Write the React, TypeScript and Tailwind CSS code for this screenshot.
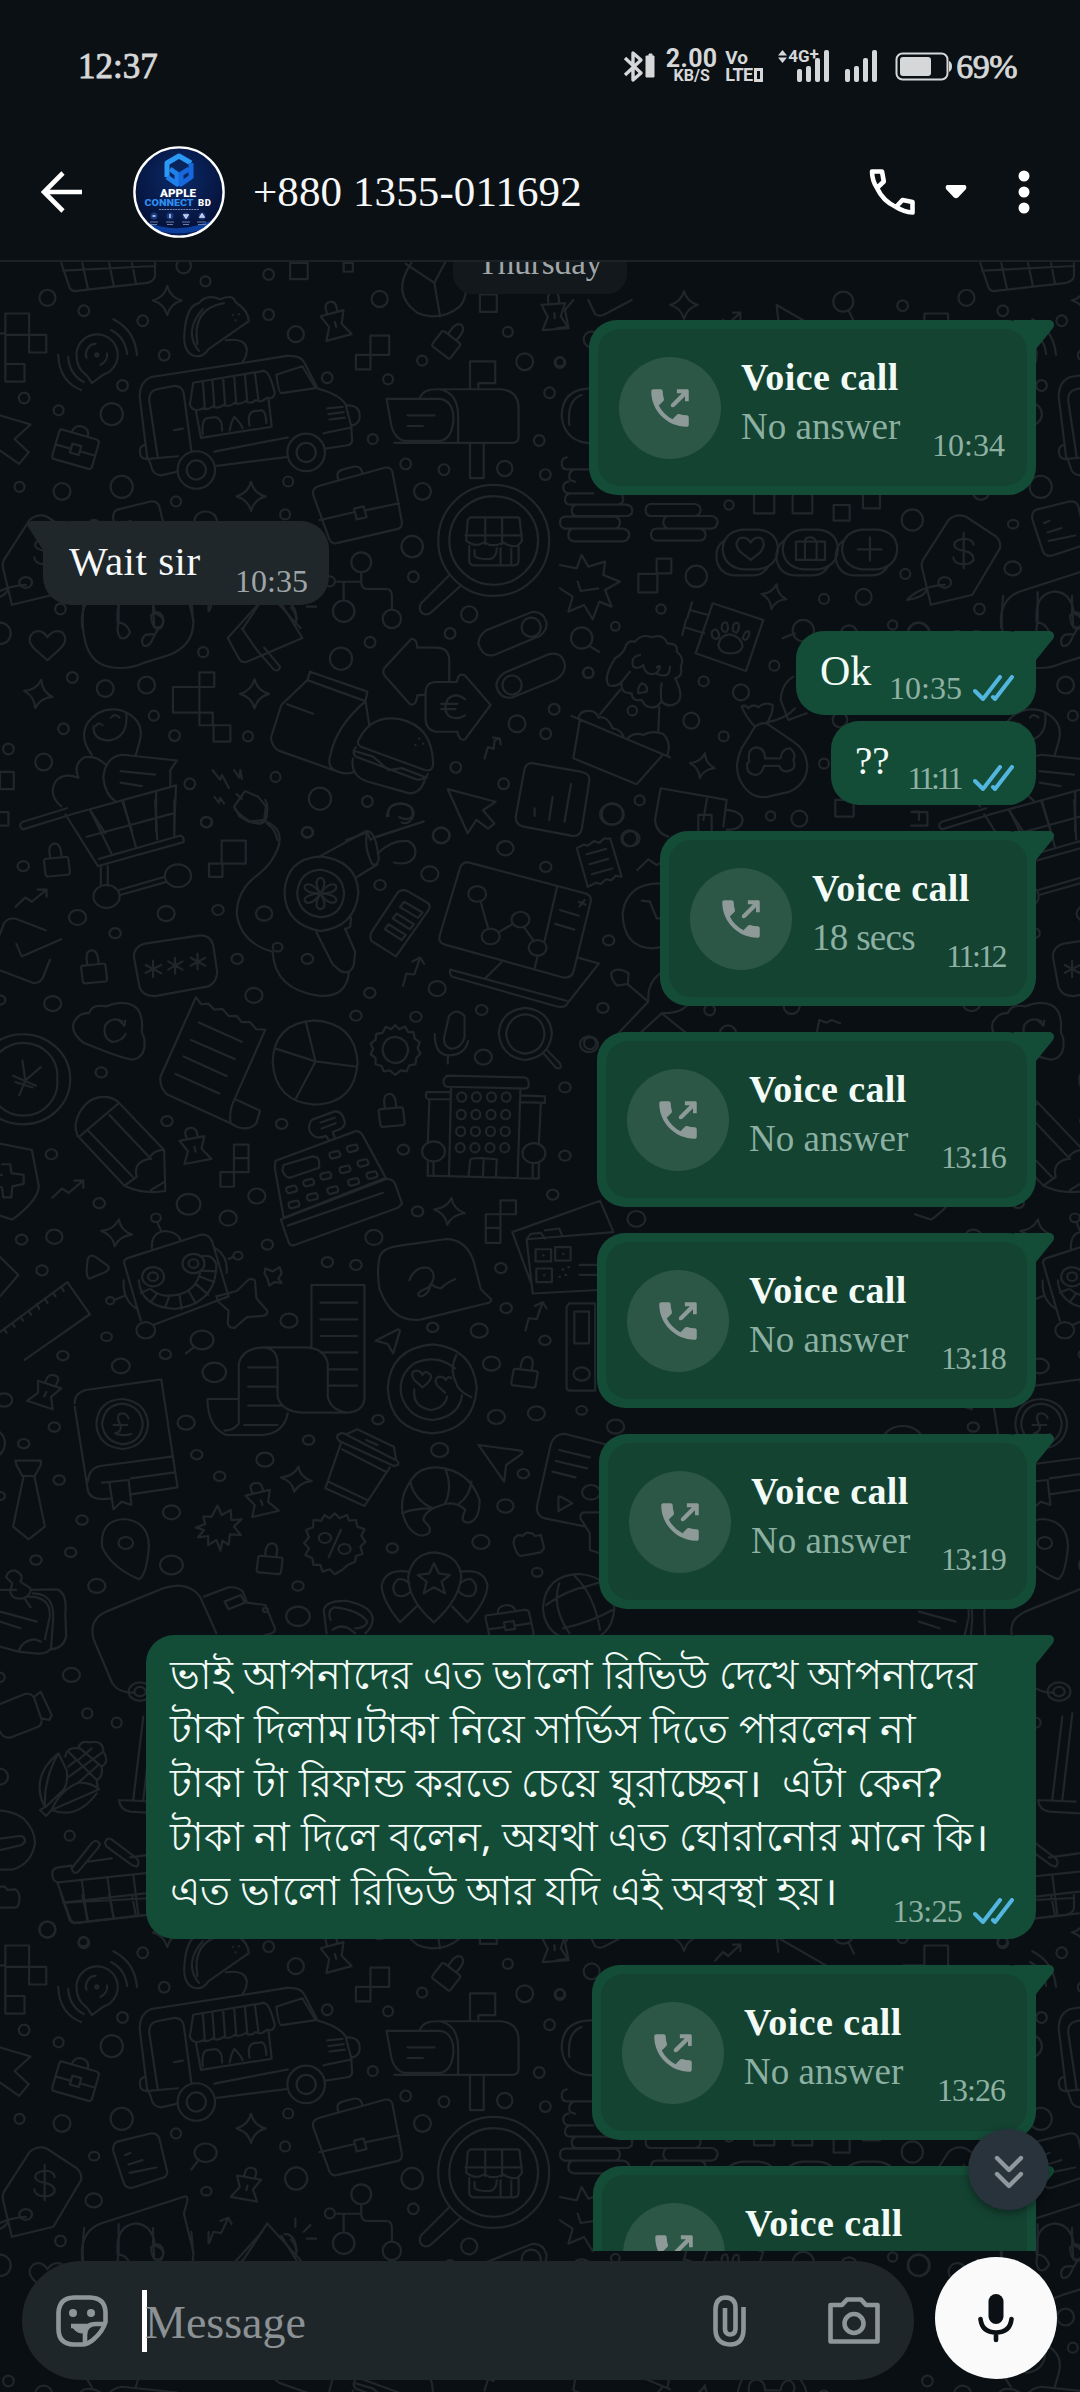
import type { ReactNode } from "react";

type Dot = [number, number, number];

const SERIF = "font-['Liberation_Serif',serif]";

const Dots = ({ items }: { items: Dot[] }) => (
  <>
    {items.map(([cx, cy, r], i) => (
      <circle key={i} cx={cx} cy={cy} r={r} />
    ))}
  </>
);

/* Small doodles that repeat all over the wallpaper */
const Star = ({ at }: { at: string }) => (
  <path transform={at} d="M0-38Q8-8 38 0Q8 8 0 38Q-8 8-38 0Q-8-8 0-38Z" />
);
const Lock = ({ at }: { at: string }) => (
  <path transform={at} d="M-24-10H24Q30-10 30-4V32Q30 40 24 40H-24Q-30 40-30 32V-4Q-30-10-24-10ZM-14-10V-30Q-12-50 0-50Q12-50 14-30V-10" />
);
const Pin = ({ at }: { at: string }) => (
  <path transform={at} d="M-14-28V-46Q-12-58 0-58Q12-58 14-46V-28M-32-28H30L16 5L34 38H-34L-18 5ZM0-4V10" />
);
const Zigzag = ({ at }: { at: string }) => (
  <path transform={at} d="M-40 24L-16-2L0 10L36-24M14-24H36V-4" />
);
const Case = ({ at }: { at: string }) => (
  <path transform={at} d="M-52-38H44Q54-38 54-28V34Q54 42 44 42H-46Q-54 42-54 34V-30ZM-22-38Q-20-60 0-60Q20-60 22-38M-54 4H-12M12 4H54M-12-10H12V14H-12Z" />
);

const DoodleTile = () => (
  <>
    <g transform="translate(0 240) scale(.3827)">
      <Dots
        items={[
          [480, 68, 19], [537, 108, 13], [702, 90, 14], [124, 151, 21], [219, 185, 14], [373, 211, 14], [702, 195, 14],
          [773, 246, 21], [429, 301, 14], [320, 380, 14], [63, 413, 14], [153, 445, 13], [292, 455, 29], [51, 645, 13],
          [162, 657, 22], [318, 645, 29], [460, 683, 13], [753, 631, 13], [745, 717, 13], [992, 154, 21], [1103, 315, 13],
          [1014, 364, 13], [855, 360, 14], [974, 520, 13], [1060, 585, 14], [1160, 600, 14], [1319, 597, 20], [1104, 657, 22],
          [1077, 801, 28], [1080, 880, 14], [1226, 978, 21], [1176, 1028, 14], [967, 1051, 14], [891, 1094, 29], [1371, 318, 22],
          [1463, 320, 14], [1327, 240, 13], [1436, 399, 14], [1409, 524, 14], [1425, 613, 14], [158, 964, 14], [189, 1143, 14],
          [275, 1172, 22], [383, 1163, 22], [531, 1077, 13], [402, 1243, 13], [166, 1277, 14], [456, 1295, 14], [648, 1297, 13],
          [22, 1330, 14], [114, 1364, 22], [496, 1421, 14], [720, 1403, 13], [836, 1460, 29], [960, 1467, 14], [539, 1521, 14],
          [803, 1548, 14], [1191, 1378, 14], [1351, 1264, 22], [1426, 1290, 14], [1448, 1226, 14], [1537, 1131, 14],
          [1316, 1421, 14], [1153, 1556, 21], [0, 1028, 28], [253, 300, 4], [774, 801, 29],
        ]}
      />
      <Star at="translate(437 158)" />
      <Star at="translate(656 670)" />
      <Star at="translate(665 1186)" />
      <Star at="translate(100 1186) rotate(12)" />
      {/* basket and pixels */}
      <path d="M160 60L182 125Q188 135 200 133L385 112Q402 108 405 95V60M215 60L230 128M285 60L298 122M345 60L355 113M165 80L405 68" />
      <path d="M758 60H804V102H758ZM898 60H922V83H898ZM14 192H76V248H14ZM76 248H121V294H76ZM-40 244H14V370H64V324H14" />
      <path d="M968 250H1017V300H968ZM930 300H968V338H930ZM1254 142H1298V188H1254Z" />
      <path d="M452 1168H521V1235H452ZM521 1130H560V1168H521ZM521 1235H556V1268H521ZM558 1268H602V1311H558ZM0 1390H36V1435H0ZM-20 1495H22V1530H-20" />
      {/* podcast bubble */}
      <path d="M228 355Q198 335 200 295A54 54 0 1 1 270 352L240 374ZM226 308A28 28 0 0 1 250 271M280 296A28 28 0 0 1 262 326M152 300Q155 370 212 392M178 306Q182 352 219 371M296 207Q352 235 358 300M290 235Q328 255 332 298" />
      {/* taco */}
      <path d="M505 302Q475 290 483 232Q490 170 520 165Q540 140 575 155Q610 140 615 162Q650 185 650 212L545 285Q528 310 505 302M520 290Q478 240 530 180M516 272Q500 180 585 165M590 262Q640 255 645 285Q645 305 634 318M608 196H609M624 194H625M615 210H616" />
      {/* food truck */}
      <path d="M385 572L365 410Q365 370 395 358L750 303Q785 300 795 320L830 388Q890 405 903 430L918 487L920 525Q918 535 905 537L850 545M750 567L565 590M465 605L420 615Q398 612 395 590L388 572L465 565M560 553L752 516M845 505L918 490M412 567L390 420Q388 395 410 390L455 381Q475 380 480 400L500 550M455 497L478 493M908 432Q940 432 940 460Q940 482 918 485M378 535Q360 540 368 565Q374 574 388 572" />
      <path d="M722 352L790 330L825 387L735 400Q728 400 722 352ZM505 373L690 342Q705 345 718 400Q715 418 698 412Q680 428 668 418Q655 430 642 421Q625 432 612 426Q600 438 585 431Q570 442 555 435Q545 445 530 440Q505 452 496 430ZM530 370L535 438M555 366L560 434M583 361L588 430M612 356L617 425M640 352L646 420M666 347L675 416M512 447L525 517L710 488L702 418M530 508Q525 465 545 465L565 463Q582 470 580 498M600 498Q602 480 612 462Q630 480 634 492M652 485Q645 450 665 447L685 445Q695 450 696 478M855 440L895 436M858 455L898 450M861 469L901 464" />
      <Dots items={[[513, 601, 49], [513, 601, 25], [800, 555, 49], [800, 555, 25]]} />
      {/* mailbox */}
      <path d="M1010 415H1150Q1185 420 1185 470Q1180 525 1145 525H1055Q1025 515 1020 470ZM1098 412Q1105 390 1140 390H1310Q1355 395 1355 440V515Q1355 530 1340 530H1030M1150 390Q1197 400 1197 460V530M1228 388V317H1294V374H1250V388M1228 530V622H1264V530M1065 458H1135M1065 486H1105" />
      {/* briefcases */}
      <path d="M835 642L1005 595Q1020 592 1025 605L1050 735Q1052 750 1040 755L880 792Q865 795 860 780L818 665Q815 648 835 642ZM885 628Q875 605 895 600L925 592Q945 590 947 610M835 732L922 712M957 706L1043 688M925 702L950 696L958 724L932 730Z" />
      <Case at="translate(198 545) rotate(16)" />
      {/* store under a magnifier */}
      <Dots items={[[1290, 785, 145], [1290, 785, 116]]} />
      <path d="M1172 878L1100 950Q1092 968 1105 976Q1118 982 1130 970L1203 904M1228 725H1352Q1358 725 1358 732L1364 785Q1355 802 1340 800Q1325 798 1315 790Q1290 805 1265 790Q1240 805 1218 785L1222 732ZM1216 772H1364M1268 725V795M1312 725V795M1226 800V840Q1228 850 1240 850H1345Q1355 848 1355 838V800M1240 810V825Q1245 834 1280 834Q1298 830 1298 805M1308 850V805M1336 850V808" />
      {/* cursor on the left edge */}
      <path d="M-10 455L80 482L38 520L75 555L50 585L-8 545" />
      <Pin at="translate(876 218) rotate(-15)" />
      <Pin at="translate(1449 195) rotate(-4)" />
      <Lock at="translate(1175 262) rotate(38)" />
      <path d="M1075 60Q1020 140 1090 190Q1150 215 1200 175Q1225 150 1215 90M1060 62L1135 112L1150 200M1135 112L1165 55" />
      {/* sitemap */}
      <Dots items={[[944, 842, 26], [898, 970, 28], [1024, 990, 24], [862, 892, 13]]} />
      <path d="M876 893H944M944 868V893Q944 912 960 912H1010Q1024 912 1024 930V966M898 893V942" />
      {/* megaphone, heart, headphones bubble */}
      <path d="M685 940L595 1040L625 1095Q635 1108 650 1100L790 1040L735 950M632 1015L670 1070L715 1122Q728 1130 732 1115L690 1065M760 960Q780 980 772 1005M802 958H826" />
      <path d="M124 1098L92 1070Q65 1045 88 1025Q110 1015 124 1038Q140 1015 162 1025Q182 1045 155 1070Z" />
      <path d="M220 930Q200 1100 285 1115Q330 1125 375 1105L440 1085Q505 1060 505 1000L500 940M310 920V1000M400 930V975M395 980Q412 970 425 990Q430 1012 412 1018Q395 1010 395 980ZM310 1000Q330 1000 340 1025Q330 1045 315 1040Q302 1025 310 1000ZM412 1018L400 1040Q390 1065 375 1060Q365 1045 380 1032L400 1030M545 940L545 970" />
      {/* arrows with euro, pills */}
      <path d="M1075 1042L1005 1118Q998 1128 1005 1138L1070 1212Q1085 1220 1090 1195V1190L1110 1188M1075 1042Q1090 1042 1090 1065H1140Q1174 1065 1174 1100V1152M1195 1150Q1198 1130 1215 1138L1282 1215L1215 1305Q1200 1310 1195 1285H1140Q1112 1280 1112 1250V1180Q1112 1158 1135 1155H1193ZM1215 1200Q1190 1180 1170 1200Q1155 1230 1175 1245Q1195 1255 1215 1242M1153 1212H1195M1153 1226H1190" />
      <path d="M1270 1020L1390 972Q1420 970 1428 1000Q1430 1020 1410 1035L1290 1085Q1260 1090 1250 1055Q1250 1035 1270 1020ZM1320 1130L1435 1082Q1470 1075 1476 1110Q1478 1135 1450 1150L1340 1195Q1305 1202 1297 1165Q1297 1145 1320 1130Z" />
      <Dots items={[[1388, 1012, 25], [1338, 1163, 25], [1520, 1040, 28]]} />
      {/* paper bag and burger */}
      <path d="M810 1128L960 1180L955 1205L803 1150ZM803 1150L735 1215L708 1300Q710 1325 730 1335L880 1388Q905 1398 925 1390M750 1213L818 1238M955 1205Q880 1270 865 1340Q850 1380 885 1390M955 1205L965 1268M938 1305Q970 1240 1045 1252Q1130 1270 1132 1370Q1130 1390 1110 1385L945 1325Q930 1318 938 1305ZM925 1335L975 1350L1015 1385L1050 1380L1115 1405M930 1325Q918 1340 930 1350L1090 1410Q1110 1412 1118 1395M922 1355Q915 1400 960 1415L1070 1446Q1100 1445 1110 1410M1095 1303H1096M1105 1316H1106M1085 1320H1086" />
      <path d="M1266 1355L1275 1325L1290 1330L1292 1308L1306 1302L1288 1300M1306 1302L1308 1318M1170 1435L1295 1468L1262 1490L1292 1525L1275 1538L1245 1515L1222 1550ZM1390 1367L1520 1390Q1542 1395 1540 1412L1520 1540Q1515 1560 1495 1557L1365 1532Q1345 1525 1348 1505L1370 1385Q1375 1365 1390 1367ZM1397 1485V1505M1444 1455L1435 1515M1492 1422L1475 1520" />
      {/* trolley load */}
      <path d="M240 1345Q205 1300 230 1260Q265 1215 320 1230Q380 1255 365 1310L355 1345M245 1270Q240 1305 285 1308Q335 1300 330 1240M290 1248Q300 1235 312 1248M250 1270Q258 1258 268 1268M160 1480Q125 1450 145 1415Q165 1390 205 1405Q190 1370 220 1352Q250 1345 275 1370M462 1360L320 1345Q275 1350 270 1405Q275 1450 300 1465M462 1360L445 1385V1430M315 1388L405 1397M315 1418L370 1427" />
      <path d="M175 1485L60 1520Q45 1530 60 1540L190 1500L460 1425L455 1545M235 1490L275 1550M320 1468L345 1545M408 1440V1545" />
      {/* plug */}
      <path d="M555 1385L575 1410L580 1398L598 1432M612 1385L625 1405L628 1385L632 1408M560 1455L572 1470L575 1458L585 1472M640 1440L612 1480L625 1505L650 1520L690 1515L695 1480L675 1455ZM618 1448L632 1460M650 1520L680 1526L698 1505M698 1525Q720 1540 725 1568M1015 1505Q1010 1475 1045 1472Q1085 1475 1080 1505Q1070 1530 1050 1522M970 1565L1105 1520M905 1568L960 1548L968 1568" />
    </g>

    <g transform="translate(0 1930) scale(.3954 .3333) translate(0 -4896)">
      <Dots items={[[520, 668, 28], [238, 678, 13], [237, 811, 21], [522, 783, 13], [65, 853, 16]]} />
      <path d="M118 655L195 715Q208 730 205 750L135 890L30 920L8 810Q5 795 10 785L75 665Q95 645 118 655ZM138 740Q135 720 110 722Q85 728 90 745Q95 755 115 758Q140 765 138 785Q130 800 108 798Q88 795 87 778M113 705V810M-30 905Q0 865 65 860M-30 905Q10 900 20 875" />
      <path d="M295 635L380 610Q398 608 403 625L423 725Q423 740 412 743L335 773Q318 775 313 758L287 665Q283 645 295 635ZM316 675L330 668M325 703L360 690M328 728L395 712M503 688L484 718M208 990Q200 905 255 880L465 800Q475 795 474 812L465 850L490 970M298 975Q290 885 345 880Q385 885 392 945M388 945Q410 935 414 970Q408 995 390 985ZM676 880L615 990M676 880L760 990M720 912Q745 910 750 960M747 865V890M785 885L768 905" />
      <Pin at="translate(625 770) rotate(12)" />
      <Zigzag at="translate(555 900) rotate(-25)" />
    </g>

    <g transform="translate(0 800) scale(.4082 .3571)">
      <Dots
        items={[
          [506, 62, 14], [57, 185, 14], [190, 329, 21], [407, 318, 21], [282, 373, 14], [534, 308, 14], [647, 318, 20],
          [129, 570, 21], [0, 560, 13], [622, 547, 21], [581, 445, 14], [753, 445, 14], [753, 90, 14], [1081, 99, 21],
          [1053, 207, 21], [931, 238, 14], [1238, 135, 20], [1499, 40, 29], [1546, 108, 21], [1337, 187, 14], [1491, 393, 14],
          [906, 540, 14], [1071, 528, 21], [872, 604, 14], [1019, 607, 14], [1180, 588, 14], [1477, 582, 14], [1184, 720, 21],
          [1443, 684, 22], [1384, 805, 14], [1384, 996, 14], [1354, 1105, 14], [988, 979, 14], [248, 763, 14], [409, 899, 14],
          [690, 907, 14], [126, 992, 14], [243, 1129, 14], [462, 1132, 29], [629, 1109, 21], [559, 1171, 21], [53, 1231, 14],
          [133, 1223, 20], [655, 1245, 14], [916, 1225, 21], [1023, 1152, 14], [802, 1294, 14], [872, 1302, 14], [103, 1317, 14],
          [1227, 1311, 14], [1240, 1423, 14], [1559, 1173, 22],
        ]}
      />
      {/* trolley */}
      <Dots items={[[261, 270, 32], [436, 212, 32]]} />
      <path d="M160 40L240 185L450 118Q452 100 440 100L242 165M222 30L275 155M302 5L333 132M380 0L385 110M427 0V100M213 103L422 38M247 187V238M264 185V240M292 252L404 215M294 266L406 230M512 178H545V215H512ZM543 114H602V178H543Z" />
      <Lock at="translate(138 172) rotate(-6)" />
      <Lock at="translate(229 471) rotate(-6)" />
      <Lock at="translate(958 873) rotate(-6)" />
      <Zigzag at="translate(78 275)" />
      <Zigzag at="translate(1010 480) rotate(-30)" />
      <Zigzag at="translate(168 1090)" />
      <Zigzag at="translate(1310 1445) rotate(-30)" />
      <Star at="translate(286 1212) rotate(8)" />
      <Star at="translate(1101 1152) rotate(8)" />
      <path d="M-5 390L10 345Q20 328 40 333L112 365M40 403L53 438L150 390M-5 475L80 512Q95 515 105 498L122 448" />
      <path d="M355 402L490 379Q515 378 522 405L532 480Q532 510 510 522L380 549Q350 550 342 525L328 440Q328 410 355 402ZM375 450V496M357 462L395 485M357 484L395 462M429 442V486M412 452L447 475M412 475L447 452M484 430V475M467 442L503 464M467 464L503 442" />
      {/* hair dryer and its cable */}
      <Dots items={[[680, 412, 12]]} />
      <path d="M575 25Q620 80 650 60Q660 20 650 0M655 62Q710 90 665 170Q650 195 620 220Q580 260 580 320Q590 400 668 425Q672 530 780 548Q850 555 855 480M780 160L895 88Q920 80 928 165Q925 185 912 180Q890 130 900 88M875 215L925 180M697 260Q700 165 785 158Q875 170 878 260Q870 355 785 367Q700 350 697 260ZM728 262Q732 200 785 195Q840 205 843 262Q838 325 785 328Q732 320 728 262ZM775 370L815 460L835 480Q860 490 867 460L870 425L845 360M860 330L858 355L845 362M948 45Q950 10 985 10Q1015 15 1010 45Q1000 60 978 48M915 105L1038 60M925 150Q960 110 1000 115Q1025 130 1015 160Q1000 185 965 175" />
      {[0, 60, 120, 180, 240, 300].map((turn) => (
        <path key={turn} d="M785 262Q770 235 778 222Q785 214 792 222Q800 235 785 262Z" transform={`rotate(${turn} 785 262)`} />
      ))}
      <path d="M975 258Q985 248 1000 256L1050 290Q1055 298 1050 308L970 438L910 395Q905 385 910 370ZM990 285L1035 315L1024 330L980 300ZM972 318L1014 348L1004 362L962 332ZM952 348L994 378L984 392L943 362Z" />
      {/* laptop with a chart */}
      <path d="M1145 174L1435 262Q1450 268 1447 285L1405 480Q1400 500 1380 497L1090 405Q1073 400 1077 380L1127 190Q1132 175 1145 174ZM1365 242L1334 395M1317 438L1310 470M1178 287L1196 360M1222 370L1255 348M1285 358L1308 395M1372 308L1418 324M1360 347L1407 363M1418 285L1434 293M1432 280L1420 298M1228 455L1188 500M1418 442L1467 458L1385 577Q1375 582 1360 577L1108 495Q1100 488 1103 475L1388 562" />
      <Dots items={[[1169, 263, 22], [1202, 382, 22], [1275, 335, 22], [1317, 414, 22]]} />
      <path d="M1413 135L1430 125L1440 128L1455 115L1468 120L1480 108L1495 108L1523 215L1508 212L1498 225L1485 222L1472 235L1460 232L1440 243ZM1437 152L1485 137M1444 180L1490 165M1450 208L1500 192" />
      {/* cloud, coin, receipt, pie */}
      <path d="M205 680Q170 650 182 620Q195 595 218 597Q225 570 260 578Q300 560 325 575Q350 590 348 640Q345 650 353 665Q360 720 325 727Q300 725 205 680ZM300 620Q275 605 258 630Q250 665 275 678Q300 675 308 655M290 615L305 632L307 618" />
      <path d="M-60 782A115 125 0 1 0 172 782A115 125 0 1 0 -60 782ZM-25 782A83 92 0 1 0 140 782A83 92 0 1 0 -25 782ZM55 730L62 785L47 827M62 785L100 748M32 772L88 800M38 790L80 805" />
      <path d="M480 552L393 775Q390 805 410 825L565 905Q560 870 575 837L637 870L628 905Q610 928 580 915L565 905M480 552L493 572L510 570L525 587L545 585L560 605L580 605L592 622L612 622L628 642L650 643L575 837M487 623L592 677M468 672L575 725M450 718L555 773M430 767L537 822" />
      <path d="M668 735Q670 625 770 617Q870 625 876 735Q870 850 770 853Q675 845 668 735ZM750 625L773 732L875 747M677 697L773 732L725 835" />
      <path d="M968 630L978 642L992 634L1000 650L1013 650L1016 668L1028 678L1023 695L1030 710L1020 722L1018 740L1003 743L996 760L982 757L968 770L955 757L940 760L935 745L920 740L920 722L908 712L914 697L908 682L920 672L922 655L937 652L945 635L958 642ZM937 700Q940 665 968 663Q998 668 1000 700Q995 735 968 737Q940 732 937 700Z" />
      <path d="M1100 605Q1118 580 1138 605V665Q1130 695 1105 697Q1085 690 1088 665ZM1065 655Q1065 715 1100 715Q1138 715 1147 675M1097 715V738M1222 655Q1225 590 1287 582Q1348 590 1352 655Q1345 720 1287 728Q1228 720 1222 655ZM1240 655Q1245 605 1287 600Q1330 605 1334 655Q1330 705 1287 710Q1245 705 1240 655ZM1330 708L1362 750Q1378 755 1372 738L1340 700M1497 485Q1510 465 1540 485L1538 515L1512 520Q1498 505 1497 485" />
      {/* building */}
      <path d="M1095 772L1285 777Q1297 780 1295 800Q1293 808 1285 808L1095 803Q1085 800 1087 782ZM1105 805L1100 1052M1275 808L1268 1058M1045 818H1104V838H1050Q1040 835 1045 818ZM1275 827L1335 830V848L1273 846M1052 838L1048 960M1325 850L1320 965M1047 1052L1320 1060M1048 1015V1052M1062 1015V1052M1305 1018V1058M1320 1015V1058M1148 1054L1152 1008Q1155 1002 1180 1003L1217 1006L1215 1056M1185 1004L1183 1055" />
      <Dots items={[[1062, 984, 28], [1308, 989, 28]]} />
      {[832, 881, 928, 974].map((y) =>
        [1131, 1167, 1204, 1240].map((x) => <ellipse key={`${x}-${y}`} cx={x - (y - 832) / 40} cy={y} rx="11" ry="13" />)
      )}
      {/* pencil */}
      <path d="M190 940Q178 910 195 875Q220 825 265 832Q285 838 293 850L402 980L405 1095Q350 1105 305 1080ZM195 942L290 850M215 925L325 1055M268 882L370 1005M305 1080L335 1055Q325 1015 365 1005Q375 980 402 980M370 1092L402 1070" />
      <Pin at="translate(477 975) rotate(-12)" />
      <path d="M573 965H609V1042H573ZM573 1003H609M540 1042H573V1083H540ZM1226 1121H1264V1160H1226ZM1190 1160H1226V1240H1190ZM1190 1198H1226" />
      {/* cash register */}
      <path d="M675 1010L870 928Q882 925 890 942L945 1058L695 1170L673 1030ZM765 895L820 872Q840 870 845 905Q842 920 825 925L815 930L820 945M805 952L798 940Q770 955 758 925Q755 905 765 895M785 903L820 890M788 920L822 905M695 1022L765 998Q782 998 782 1015V1030L710 1058Q695 1055 692 1035ZM688 1175L945 1062Q962 1060 968 1075L985 1130L975 1142L720 1247Q710 1248 707 1238ZM705 1192L938 1100" />
      {[[820, 993], [863, 975], [798, 1052], [845, 1034], [889, 1016], [714, 1090], [756, 1071], [720, 1132], [765, 1111], [815, 1092], [866, 1069], [911, 1050]].map(([x, y]) => (
        <rect key={`${x}-${y}`} x={x - 13} y={y - 8} width="26" height="17" rx="6" transform={`rotate(-16 ${x} ${y})`} />
      ))}
      {/* shield, robot, ruler */}
      <path d="M-10 960L78 980L95 1080Q95 1120 30 1175L-10 1160M5 1020H25L28 1045L58 1050V1075L30 1082L28 1113H8L5 1085L-10 1080M-5 1050H5Z" />
      <path d="M305 1300Q300 1285 320 1280L490 1218Q515 1212 522 1245L560 1390L375 1470M345 1458L305 1300M372 1255Q370 1210 405 1207Q435 1210 442 1232M395 1207L385 1182M528 1255Q560 1280 555 1325M560 1285L572 1280M303 1345Q300 1400 335 1425M280 1400L305 1388M340 1345Q345 1420 430 1425Q530 1410 530 1300Q520 1270 495 1278M370 1370Q385 1385 405 1388Q475 1390 490 1325M365 1370L345 1380M385 1382L370 1405M415 1388L405 1420M440 1388L445 1425M462 1375L480 1410M480 1355L510 1385M490 1335L525 1350M492 1318L530 1320" />
      <Dots items={[[382, 1170, 12], [583, 1276, 11], [270, 1402, 10], [357, 1485, 23], [375, 1335, 27], [375, 1335, 12], [474, 1298, 27], [474, 1298, 12]]} />
      <path d="M0 1490L165 1350L220 1440L60 1568M10 1480L16 1492M30 1465L36 1475M50 1447L56 1458M70 1430L76 1441M90 1412L96 1425M110 1396L116 1408M130 1380L136 1390M150 1362L156 1375M0 1280L45 1330L0 1390M215 1285Q220 1270 235 1280L265 1305Q270 1315 258 1322L220 1340Q208 1340 215 1285Z" />
      <path d="M530 1390L580 1375L610 1342Q625 1340 625 1350L628 1395L655 1430Q655 1445 640 1445L605 1448L575 1478Q560 1480 558 1465L560 1430L535 1405ZM650 1312L668 1320L685 1308L690 1325L682 1340L690 1352L672 1350L660 1360L655 1340L648 1325Z" />
      <path d="M930 1280Q935 1255 980 1248L1090 1230Q1140 1228 1160 1290L1178 1370L1203 1398Q1205 1408 1190 1410L1030 1455Q960 1465 930 1370Q922 1320 930 1280ZM1003 1345Q1015 1305 1050 1310Q1075 1330 1050 1365Q1015 1380 1028 1390Q1050 1390 1055 1355Q1065 1365 1080 1368Q1095 1350 1115 1342" />
      <path d="M1255 1210L1470 1122L1503 1210L1290 1230L1305 1382L1500 1370M1255 1210L1300 1350M1290 1230L1300 1215L1325 1212L1335 1228M1335 1205L1370 1200L1378 1222M1312 1258H1350V1292H1312ZM1360 1252H1398V1290H1360ZM1314 1312H1352V1350H1314ZM1420 1302H1470M1420 1330H1470M1330 1275H1332M1379 1271H1381M1332 1331H1334M1378 1315H1380M1392 1308H1394M1370 1335H1372M1385 1330H1387" />
    </g>

    <g transform="translate(0 1300) scale(.4082 .3333)">
      <Dots
        items={[
          [261, 110, 13], [154, 167, 14], [405, 163, 14], [495, 120, 28], [708, 62, 21], [296, 198, 22], [525, 217, 29],
          [133, 381, 14], [58, 431, 14], [145, 540, 14], [456, 368, 21], [482, 464, 14], [538, 529, 14], [649, 479, 21],
          [756, 420, 14], [926, 359, 14], [1077, 450, 21], [1060, 82, 14], [1174, 92, 21], [1335, 121, 14], [1204, 191, 21],
          [1216, 351, 21], [1314, 340, 21], [1425, 331, 13], [1508, 380, 21], [1282, 521, 14], [1448, 577, 22], [1238, 618, 20],
          [1178, 726, 21], [1316, 817, 13], [961, 744, 14], [420, 637, 21], [420, 795, 28], [201, 660, 14], [173, 757, 14],
          [88, 780, 14], [237, 858, 21], [730, 858, 14], [730, 949, 29], [175, 1125, 21], [10, 300, 20], [0, 588, 12], [308, 729, 18],
        ]}
      />
      <Pin at="translate(112 280) rotate(22)" />
      <Pin at="translate(640 605) rotate(-16)" />
      <Star at="translate(726 538) rotate(8)" />
      <Lock at="translate(1287 220) rotate(8)" />
      <Lock at="translate(662 780) rotate(6)" />
      {/* ledger */}
      <path d="M183 310Q182 280 210 270L395 238L435 562L320 583M275 595Q220 605 215 570L183 320M215 545Q218 505 245 498L420 470M320 535L428 517M250 548L315 540L322 615L298 605L278 628L268 548M236 372Q240 300 300 297Q358 305 363 372Q358 440 300 447Q240 440 236 372ZM250 372Q255 315 300 311Q345 318 350 372Q345 430 300 433Q255 425 250 372ZM315 355Q310 335 292 342Q285 355 295 375Q300 395 282 400Q300 410 322 402M278 375H312M475 142L455 160" />
      {/* scroll */}
      <path d="M763 -45V140M763 -45H893V295Q890 335 850 338H740Q690 335 680 290V190Q680 145 645 142Q595 145 585 190V370Q575 390 550 392M645 142H750Q795 145 803 190V290Q810 330 850 338M508 297H583M508 297Q510 385 555 405H645Q695 400 705 340M785 8H875M785 58H875M785 108H875M785 157H875M805 208H875M805 257H875M608 202H675M608 260H675M608 317H690M598 375H680" />
      {/* heart-eyed donut */}
      <path d="M950 265Q955 145 1060 133Q1160 145 1168 265Q1160 390 1060 400Q955 390 950 265ZM1115 205Q1070 160 1015 190Q975 225 983 285Q1000 355 1060 360Q1125 350 1132 285M1118 165Q1100 210 1118 250Q1120 270 1155 292M1035 262L1015 240Q1003 218 1018 212Q1032 212 1035 225Q1042 208 1055 225Q1060 240 1035 262ZM1090 278L1070 255Q1062 235 1076 230Q1088 230 1092 240Q1100 225 1105 235M1015 268Q1010 320 1055 330Q1090 325 1095 290" />
      <path d="M920 122L975 88Q982 88 978 100L963 160L950 132ZM1172 435L1275 452Q1285 455 1275 465L1240 495L1235 545ZM1395 10H1458V272H1395Q1388 270 1388 260V20ZM1407 35H1443V130H1407ZM38 482H100V495L85 528H55L40 495ZM58 528L32 680L70 718L110 680L84 528" />
      <Dots items={[[1425, 222, 20], [-40, 430, 52]]} />
      {/* coffee cup */}
      <path d="M825 410Q830 398 842 400L965 478Q980 485 975 495L965 498L830 422ZM850 402L875 388L965 440L970 478M835 430L797 565L893 618L955 502M838 448L945 515M805 545L900 600M897 420L925 435" />
      {/* croissant */}
      <path d="M1010 535Q1030 500 1070 502Q1150 510 1175 600Q1175 665 1145 668Q1125 665 1140 630Q1120 605 1090 612L1060 625Q1030 650 1040 665Q1060 685 1050 700Q1025 720 1000 680Q965 610 1010 535ZM1005 545Q1015 600 1060 625M1090 505Q1110 560 1090 612M985 640Q1010 625 1060 625M1125 610Q1150 590 1155 545" />
      <path d="M533 617L543 645L565 630L567 660L592 658L573 680L590 705L563 703L560 735L545 722L540 752L530 720L510 735L510 708L485 712L500 690L480 683L503 672L498 650L518 650Z" />
      <path d="M820 640L832 655L850 645L855 662L872 660L875 680L893 688L885 708L895 725L883 740L888 762L872 768L870 785L852 795L838 810L820 823L808 808L790 815L785 795L768 795L765 775L748 765L757 745L745 730L757 712L750 690L767 682L768 660L787 662L795 645L808 655ZM835 690L805 772" />
      <Dots items={[[796, 714, 15], [844, 747, 15]]} />
      <path d="M340 838Q270 800 250 740Q245 660 305 657Q365 665 365 740Q358 830 340 838ZM980 967Q935 900 935 855Q945 805 1000 815M1145 967Q1195 900 1194 855Q1185 805 1130 815M1063 967Q1000 900 1000 830Q1010 760 1065 757Q1125 765 1130 830Q1125 900 1063 967ZM1063 790L1075 820L1102 825L1082 845L1090 880L1063 862L1038 880L1045 845L1023 825L1052 820ZM980 967L1020 920M1145 967L1108 920M1003 850Q990 835 975 838Q955 860 970 885Q990 895 1005 875M1128 850Q1140 835 1155 838Q1175 860 1160 885Q1140 895 1125 875" />
      <path d="M1260 715Q1268 700 1280 708L1290 698L1305 700L1310 708L1325 705L1333 745L1325 757L1275 768Q1265 765 1258 730ZM1490 435L1385 402Q1360 400 1350 430L1315 620Q1315 650 1335 655L1435 680M1370 450L1445 472M1362 483L1438 505M1353 515L1410 532M1368 590Q1370 585 1402 610L1368 633ZM1480 637H1430Q1420 640 1422 655L1445 700V750L1470 760M1330 925Q1335 825 1420 822Q1500 830 1505 925Q1500 1020 1420 1025Q1335 1015 1330 925ZM1370 850Q1350 920 1395 1000M1405 825Q1455 880 1470 990M1338 915Q1390 870 1435 860L1475 845M1380 985Q1450 965 1500 930" />
      {/* pinned notes, suitcase, bell */}
      <path d="M0 870L40 870M75 870L140 868Q165 880 160 940L162 1010Q155 1045 125 1048M80 880Q135 880 130 960L125 1045Q115 1065 85 1060L45 1055L0 1040M70 890Q125 890 122 950L110 1018M45 1055Q55 1020 85 1018L100 1025M0 935L90 965M0 965L50 985M15 832Q18 810 38 812Q60 825 50 845L75 865Q75 890 55 895Q30 900 25 875L30 850ZM60 895L75 922M230 1020Q215 960 260 935L400 865Q460 840 490 890L530 1000M230 1020L275 1150Q290 1180 330 1178M500 890L560 862Q585 860 595 875L605 908L650 915L672 980Q680 1000 650 1005M550 905L590 885L600 908L560 928ZM800 1000L793 930Q800 900 850 903Q915 920 913 960Q910 985 895 1000M810 960Q800 930 820 922Q880 930 900 965Q895 985 870 985M815 990Q840 965 870 1000" />
      <Case at="translate(1248 975) rotate(-10)" />
      <Dots items={[[343, 1175, 28], [343, 1175, 14], [650, 930, 6]]} />
    </g>

    <g transform="translate(0 1580) scale(.3333)">
      <Dots items={[[262, 400, 15], [350, 428, 15], [0, 590, 24], [209, 767, 15], [142, 1048, 24], [0, 292, 14], [250, 1085, 14]]} />
      <path d="M-20 380L75 342Q95 338 103 355L125 420Q125 435 115 440L30 473Q10 475 0 455M103 350L122 335L155 405L148 420L125 415M-60 695Q20 680 70 715Q105 750 105 790Q95 850 40 868L-40 870M-30 780L60 768Q75 768 75 785L65 795L-20 815M-20 920H15L22 930L45 928Q60 935 58 960Q58 980 45 983H-20" />
      {/* corn */}
      <path d="M175 520Q100 580 125 660L135 680Q130 600 175 520L200 570Q205 610 190 630L138 680L120 690L138 708L155 690Q180 630 235 608Q270 605 298 628L155 690Q230 720 290 640M196 530Q200 500 235 505Q240 480 270 487Q310 480 310 515Q330 545 305 560Q310 590 290 600L293 620M205 515L290 600M240 505L305 560M235 540L275 505M207 590L310 515M235 608L295 555M205 560L230 540" />
      {/* picnic basket and lamp */}
      <path d="M157 885Q155 865 175 862L215 857M265 845L335 835M390 832L480 820M157 885Q158 905 175 907L480 875M172 907L210 1015Q215 1030 235 1028L480 1000M192 968L480 935M245 900L262 1022M322 892L340 1012M400 885L415 1003M215 865L275 790Q290 775 300 792L295 803L235 875Q220 885 215 865ZM315 790Q318 770 335 778L410 835Q422 850 410 860L395 855L320 800ZM430 410L400 658M460 400L430 660M357 660L470 665M357 660Q360 690 390 695L480 700" />
    </g>

    <g transform="translate(560 300) scale(.3333)">
      <Dots
        items={[
          [95, 118, 24], [1028, 17, 16], [507, 615, 14], [1057, 660, 32], [409, 829, 32], [1036, 822, 15], [792, 897, 15],
          [911, 891, 24], [303, 927, 14], [166, 979, 13], [998, 975, 14], [730, 992, 32], [867, 1000, 24], [1075, 1000, 32],
          [643, 1097, 15], [85, 1118, 15], [431, 1144, 15], [543, 1177, 24], [217, 1232, 14], [394, 1262, 24], [491, 1309, 15],
          [792, 1391, 15], [840, 1260, 22], [239, 1501, 15], [157, 1542, 32], [632, 1548, 14], [718, 1556, 24], [0, 186, 13],
          [850, 5, 30],
        ]}
      />
      <Star at="translate(372 15) scale(1.1)" />
      <Star at="translate(642 890) rotate(12)" />
      <Star at="translate(427 1397) rotate(12)" />
      <Zigzag at="translate(505 62)" />
      <path d="M-10 85L25 80L15 30L40 0M85 0L105 42Q115 50 130 45L215 0M650 15L850 130M650 15L655 60M865 30L882 65M582 560H643V640H582ZM698 560H757V640H698ZM909 560H960V625H909ZM821 615H869V662H821Z" />
      {/* magnifier edge and stacks of coins */}
      <path d="M95 265Q5 265 5 350Q15 430 100 430M28 375Q20 300 65 285M20 472Q5 475 5 490Q5 508 20 508H100M45 508Q25 512 28 535Q30 543 45 545M25 545Q8 548 10 565Q12 580 30 580H100M30 580Q15 583 15 600Q15 612 30 614H175Q190 610 190 598L185 580M50 614H200Q217 618 217 632Q215 648 200 648H50Q35 645 35 632Q35 616 50 614ZM15 650H165Q180 655 180 668Q178 685 165 686H15Q0 682 0 668Q0 652 15 650ZM40 686H190Q208 690 208 705Q205 722 190 724H40Q25 720 25 705Q25 688 40 686ZM270 612H405Q422 615 422 630Q420 647 405 648H270Q257 645 257 630Q257 615 270 612ZM325 648H455Q473 652 473 667Q470 684 455 686H325Q310 683 310 667Q310 650 325 648ZM288 686H420Q437 690 437 705Q435 721 420 722H288Q273 718 273 705Q273 688 288 686Z" />
      {/* three round badges */}
      {[570, 750, 928].map((x) => (
        <path key={x} d={`M${x - 22} 689H${x + 25}Q${x + 82} 695 ${x + 84} 748Q${x + 80} 800 ${x + 25} 808H${x - 22}Q${x - 78} 800 ${x - 82} 748Q${x - 78} 695 ${x - 22} 689ZM${x - 78} 722Q${x - 105} 740 ${x - 100} 780Q${x - 90} 825 ${x - 45} 826H${x + 10}Q${x + 40} 825 ${x + 55} 800`} />
      ))}
      <path d="M572 780L540 755Q520 730 538 715Q560 708 572 728Q585 708 605 715Q620 735 600 758ZM708 725H795V780H708ZM735 725Q735 712 750 712Q765 712 768 725M735 725V780M770 725V780M893 748H965M930 712V782" />
      <path d="M65 765L85 800L135 785L130 825L180 845L135 870L155 920L118 905L98 958L72 915L25 935L38 890L0 865M0 795L50 805L65 765M53 845L62 873L115 865" />
      <path d="M290 776H334V820H290ZM235 822H292V877H235ZM458 910L610 960L558 1113L407 1060ZM396 907L382 955M390 930L445 945M378 960L367 1005M374 982L432 1000" />
      <path d="M475 1035Q480 1005 510 1003Q545 1010 548 1040Q540 1062 510 1060Q478 1060 475 1035ZM457 1010Q450 990 468 988Q482 1000 475 1015Q462 1020 457 1010ZM485 985Q485 965 500 968Q508 985 500 995Q488 998 485 985ZM518 985Q520 965 535 970Q540 988 530 998Q518 998 518 985ZM550 1010Q555 990 568 995Q568 1015 555 1020Q545 1018 550 1010Z" />
      {/* poodle in a basket */}
      <path d="M195 1045Q200 1020 225 1025Q245 1000 275 1012Q310 1000 322 1030Q355 1030 350 1055Q375 1075 362 1100Q370 1130 345 1135Q375 1190 350 1210Q325 1225 305 1205Q300 1180 305 1150M195 1045Q185 1065 165 1075Q130 1130 145 1155Q170 1165 190 1140L210 1115M185 1150Q180 1180 215 1180Q215 1205 245 1200Q260 1230 290 1220L305 1205M240 1065Q210 1070 220 1100Q235 1110 250 1095Q255 1130 290 1120Q310 1090 290 1102M285 1120Q330 1140 330 1100M245 1150Q265 1155 260 1175L235 1180Q232 1160 245 1150M180 1170L120 1243M298 1222L295 1295M35 1248L330 1372M60 1258L40 1375L230 1453L308 1365M55 1255Q60 1230 90 1233Q110 1235 115 1253Q140 1245 158 1285Q185 1290 190 1310M205 1313Q225 1295 250 1305Q275 1290 310 1302Q335 1330 322 1365M92 1040L118 1056" />
      {/* treat bag */}
      <path d="M545 1220Q555 1212 565 1225Q580 1210 595 1222Q615 1205 638 1215Q640 1240 620 1270Q600 1268 585 1280Q560 1255 545 1220ZM585 1280L545 1345Q520 1400 540 1440Q570 1500 625 1490L690 1475Q740 1450 742 1400Q740 1350 700 1325L620 1270M568 1385Q560 1345 590 1342Q615 1345 615 1375H662Q665 1345 690 1345Q710 1360 700 1380Q710 1405 690 1412Q665 1420 658 1398H612Q605 1425 585 1425Q560 1420 562 1400Q558 1390 568 1385ZM700 1130Q665 1150 662 1200L685 1260L740 1240M668 1015L705 1000M620 1268Q680 1255 705 1225" />
      {/* mug */}
      <path d="M302 1465L500 1500L490 1580M302 1465L285 1560Q288 1600 325 1610M442 1490L430 1560M415 1545H455V1600H415ZM500 1530Q545 1535 548 1560Q545 1590 500 1590M826 1500H881V1550H826ZM1058 1535H1077V1560" />
    </g>

    <g transform="translate(540 640) scale(.3333)">
      <Dots items={[[268, 595, 24], [509, 1110, 16], [755, 1098, 24], [564, 1180, 24], [150, 1210, 18]]} />
      <path d="M292 690L325 658L350 675L400 650M360 730Q260 730 248 820Q250 925 340 925L400 915M305 782L330 785L350 835H380M265 1035L325 1085L235 1180M325 1085Q320 1030 360 1000M300 1180L365 1120L440 1180M365 1120Q420 1120 440 1098M830 1180L838 1140L860 1148L875 1140L900 1150" />
    </g>
  </>
);

const Wallpaper = () => (
  <svg
    className="absolute inset-0 h-full w-full [&_*]:[vector-effect:non-scaling-stroke]"
    viewBox="0 0 1080 2392"
    fill="none"
    stroke="#20262a"
    strokeWidth="2.2"
    strokeLinecap="round"
    strokeLinejoin="round"
  >
    {[0, 919].map((x) =>
      [0, 1632].map((y) => (
        <g key={`${x}-${y}`} transform={`translate(${x} ${y})`}>
          <DoodleTile />
        </g>
      ))
    )}
  </svg>
);

const Ticks = () => (
  <svg className="h-[26px] w-[41px]" viewBox="0 0 41 26" fill="none" stroke="#53b6e0" strokeWidth="4" strokeLinecap="round" strokeLinejoin="round">
    <path d="M2 16L10 24L27 2M20 22L22 24L39 2" />
  </svg>
);

const OutTail = () => (
  <svg className="absolute top-0 -right-[18px] h-[30px] w-[40px]" viewBox="0 0 40 30" fill="#144d37">
    <path d="M0 0H36Q42 2 39 8L22 29H0Z" />
  </svg>
);

const OutBubble = ({ tail, className, children }: { tail?: boolean; className: string; children: ReactNode }) => (
  <div className={`relative shrink-0 self-end rounded-[28px] bg-[#144d37] ${className}`}>
    {tail && <OutTail />}
    {children}
  </div>
);

interface CallProps {
  width: string;
  status: string;
  statusClass?: string;
  time: string;
  timeClass?: string;
}

const Call = ({ width, status, statusClass = "", time, timeClass = "tracking-[-1px]" }: CallProps) => (
  <OutBubble tail className={`mb-[26px] h-[175px] p-[9px] ${width}`}>
    <div className="relative flex h-full items-start rounded-[22px] bg-[#144332] pl-[21px]">
      <div className="mt-[28px] flex h-[102px] w-[102px] shrink-0 items-center justify-center rounded-full bg-[#2c5747]">
        <svg className="h-[50px] w-[50px]" viewBox="0 0 24 24" fill="#8d9a98">
          <path d="M20 15.5c-1.25 0-2.45-.2-3.57-.57a1.02 1.02 0 0 0-1.02.24l-2.2 2.2a15.05 15.05 0 0 1-6.59-6.58l2.2-2.21a.96.96 0 0 0 .25-1A11.36 11.36 0 0 1 8.5 4c0-.55-.45-1-1-1H4c-.55 0-1 .45-1 1 0 9.39 7.61 17 17 17 .55 0 1-.45 1-1v-3.5c0-.55-.45-1-1-1Z" />
          <path d="M15.3 3h5c.4 0 .7.3.7.7v5H19.200V6.300L14.200 11.300Q13.200 12 12.600 11.400Q12 10.700 12.700 9.900L17.700 4.900H15.300Z" />
        </svg>
      </div>
      <div className="ml-[20px] mt-[25px] flex flex-col whitespace-nowrap">
        <span className="text-[38px] leading-[46px] font-bold tracking-[0.4px] text-[#f3fbf7]">Voice call</span>
        <span className={`mt-[4px] text-[37px] leading-[46px] text-[#8cb0a1] ${statusClass}`}>{status}</span>
      </div>
      <span className={`absolute right-[22px] bottom-[23px] text-[32px] leading-[36px] text-[#8fb1a3] ${timeClass}`}>{time}</span>
    </div>
  </OutBubble>
);

const Bars = () => (
  <svg className="h-[32px] w-[33px]" viewBox="0 0 33 32" fill="#d5d7d8">
    <rect x="0" y="19" width="5" height="13" rx="2" />
    <rect x="9" y="16" width="5" height="16" rx="2" />
    <rect x="18" y="8" width="5" height="24" rx="2" />
    <rect x="27" y="0" width="5" height="32" rx="2" />
  </svg>
);

const StatusBar = () => (
  <div className="flex h-[130px] items-start justify-between pt-[46px] pr-[63px] pl-[78px] text-[#d5d7d8]">
    <span className="text-[35px] leading-[42px] [-webkit-text-stroke:0.9px]">12:37</span>
    <div className="flex items-start pt-[4px] font-['Roboto',sans-serif] font-bold">
      <svg className="h-[33px] w-[33px]" viewBox="0 0 33 33" fill="none" stroke="#d5d7d8" strokeWidth="3.4" strokeLinejoin="round">
        <path d="M2 8L18 23L10 30V3L18 10L2 25" />
        <path d="M23 6H26V4H29V6H31V27H23Z" fill="#d5d7d8" strokeWidth="1" />
      </svg>
      <div className="ml-[10px] flex w-[51px] flex-col items-center">
        <span className="text-[25px] leading-[17px] tracking-[0.4px]">2.00</span>
        <span className="mt-[2px] text-[16px] leading-[14px]">KB/S</span>
      </div>
      <div className="ml-[8px] flex w-[40px] flex-col items-start">
        <span className="text-[19px] leading-[16px]">Vo</span>
        <span className="mt-px flex items-center text-[18px] leading-[16px] tracking-[-0.5px]">
          LTE
          <span className="ml-[1px] h-[14px] w-[9px] border-[3px] border-[#d5d7d8]" />
        </span>
      </div>
      <div className="relative ml-[32px]">
        <span className="absolute -top-[3px] -left-[19px] flex items-center text-[17px] leading-[18px]">
          <svg className="mr-[1px] h-[13px] w-[9px]" viewBox="0 0 9 13" fill="#d5d7d8">
            <path d="M4.500 0L9 5.500H0ZM4.500 13L9 7.500H0Z" />
          </svg>
          4G<span className="-mt-[5px]">+</span>
        </span>
        <Bars />
      </div>
      <div className="ml-[15px]">
        <Bars />
      </div>
      <svg className="ml-[17px] mt-[2px] h-[29px] w-[58px]" viewBox="0 0 58 29" fill="none" stroke="#d5d7d8" strokeWidth="2">
        <rect x="1.500" y="1.500" width="51" height="26" rx="6" />
        <rect x="5" y="5" width="31" height="19" rx="3" fill="#d5d7d8" stroke="none" />
        <path d="M54 9Q57 10 57 14.500Q57 18 54 20Z" fill="#d5d7d8" stroke="none" />
      </svg>
      <span className="ml-[3px] font-['Liberation_Serif',serif] text-[34px] leading-[33px] font-normal tracking-[-0.5px] [-webkit-text-stroke:0.9px]">
        69%
      </span>
    </div>
  </div>
);

const Avatar = () => (
  <svg className="ml-[50px] h-[92px] w-[92px]" viewBox="0 0 92 92">
    <defs>
      <radialGradient id="avatarBg" cx="50%" cy="35%" r="65%">
        <stop offset="0" stopColor="#0b2a68" />
        <stop offset="1" stopColor="#050f33" />
      </radialGradient>
      <clipPath id="avatarClip">
        <circle cx="46" cy="46" r="44" />
      </clipPath>
    </defs>
    <g clipPath="url(#avatarClip)">
      <rect width="92" height="92" fill="url(#avatarBg)" />
      <path d="M14 76Q46 90 84 72V92H10Z" fill="#0d3f9c" />
      <path d="M20 83Q46 93 80 80V92H18Z" fill="#071c52" />
    </g>
    <circle cx="46" cy="46" r="44.600" fill="none" stroke="#fff" strokeWidth="2.400" />
    {/* cube mark */}
    <g fill="none" strokeWidth="5" strokeLinejoin="round">
      <path d="M34 31V17L46 10L58 17" stroke="#2a9af5" />
      <path d="M34 31L44 38V28L37 23" stroke="#1f80ea" />
      <path d="M58 17V31L48 38V28L56 23" stroke="#1767dd" />
    </g>
    <g textAnchor="middle" fontFamily="Roboto, sans-serif" fontWeight="900">
      <text x="45" y="51" fontSize="10" fill="#fff" textLength="36" lengthAdjust="spacingAndGlyphs">APPLE</text>
      <text x="36" y="60" fontSize="9.500" fill="#2f8ff0" textLength="49" lengthAdjust="spacingAndGlyphs">CONNECT</text>
      <text x="71.500" y="60" fontSize="9.500" fill="#fff" textLength="13">BD</text>
    </g>
    <path d="M26 63.500H66" stroke="#8296c0" strokeWidth=".9" strokeDasharray="2 .7" />
    <g fill="#1a3c86">
      <circle cx="21" cy="70" r="3.500" />
      <circle cx="37" cy="70" r="3.500" />
      <circle cx="53" cy="70" r="3.500" />
      <circle cx="69" cy="70" r="3.500" />
    </g>
    <path d="M19.500 70H22.500M37 68V72M51 69H55L53 72ZM67 71H71L69 68Z" stroke="#d4dcf2" strokeWidth="1.400" />
    <path d="M17 76H25M33 76H41M49 76H57M64 76H73M18 78.500H24M34 78.500H40M50 78.500H56M65 78.500H73" stroke="#6b7dad" strokeWidth="1" />
  </svg>
);

const Header = () => (
  <header className="relative z-10 flex h-[262px] shrink-0 flex-col border-b-2 border-[#1b2125] bg-[#0b1014]">
    <StatusBar />
    <div className="flex h-[124px] items-center pl-[41px]">
      <svg className="h-[42px] w-[42px]" viewBox="0 0 42 42" fill="none" stroke="#fff" strokeWidth="4.600" strokeLinejoin="miter">
        <path d="M22 2L3 21L22 40M3 21H41" />
      </svg>
      <Avatar />
      <h1 className="ml-[28px] w-[616px] text-[43px] leading-[54px] tracking-[0.1px] whitespace-nowrap text-[#f5f7f8]">+880 1355-011692</h1>
      <svg className="h-[46px] w-[46px]" viewBox="0 0 46 46" fill="none" stroke="#fff" strokeWidth="4.600" strokeLinejoin="round">
        <path d="M2.500 2.500H13.500L15 12L8.500 18.500Q5 12 3.500 8ZM3 5Q6 38 43.500 43.500V32.500L33 30.500L27.500 37Q14 31 8.500 18.500" stroke="none" />
        <path d="M3 2.500H13L14.800 12.500L8 19Q3.200 12 3 2.500ZM8 19Q14 32 27 38M27 38Q35 43 43.500 43.500V33L33.500 31Z" />
      </svg>
      <svg className="ml-[30px] h-[14px] w-[22px]" viewBox="0 0 22 14" fill="#fff">
        <path d="M2 0H20Q22 1 21 4L13 12.500Q11 14 9 12.500L1 4Q0 1 2 0Z" />
      </svg>
      <svg className="ml-[50px] h-[44px] w-[14px]" viewBox="0 0 14 44" fill="#fff">
        <circle cx="7" cy="6" r="5.500" />
        <circle cx="7" cy="22" r="5.500" />
        <circle cx="7" cy="38" r="5.500" />
      </svg>
    </div>
  </header>
);

const bengaliLines = [
  "ভাই আপনাদের এত ভালো রিভিউ দেখে আপনাদের",
  "টাকা দিলাম।টাকা নিয়ে সার্ভিস দিতে পারলেন না",
  "টাকা টা রিফান্ড করতে চেয়ে ঘুরাচ্ছেন।  এটা কেন?",
  "টাকা না দিলে বলেন, অযথা এত ঘোরানোর মানে কি।",
  "এত ভালো রিভিউ আর যদি এই অবস্থা হয়।",
];

const Messages = () => (
  <main className="relative flex h-[1989px] shrink-0 flex-col overflow-hidden px-[44px]">
    <div className="-mt-[31px] mb-[26px] flex h-[63px] w-[174px] shrink-0 items-center justify-center self-center rounded-[20px] bg-[#12181c] text-[33px] leading-[40px] text-[#a0a5a8]">
      Thursday
    </div>

    <Call width="w-[447px]" status="No answer" time="10:34" timeClass="" />

    <div className="relative -ml-px mb-[26px] flex h-[84px] w-[286px] shrink-0 self-start rounded-[28px] bg-[#1f272a]">
      <svg className="absolute top-0 -left-[16px] h-[30px] w-[40px]" viewBox="0 0 40 30" fill="#1f272a">
        <path d="M40 0H4Q-2 2 1 6L16 29H40Z" />
      </svg>
      <span className="relative pt-[15px] pl-[26px] text-[41px] leading-[50px] tracking-[0.5px] text-[#f5f7f8]">Wait sir</span>
      <span className="absolute right-[21px] bottom-[6px] text-[32px] leading-[36px] text-[#9ea5a8]">10:35</span>
    </div>

    <OutBubble tail className="mb-[6px] flex h-[84px] w-[240px]">
      <span className="relative pt-[15px] pl-[24px] text-[42px] leading-[50px] text-[#f3fbf7]">Ok</span>
      <span className="absolute right-[22px] bottom-[9px] flex items-center gap-[11px] text-[32px] leading-[36px] text-[#8fb1a3]">
        10:35 <Ticks />
      </span>
    </OutBubble>

    <OutBubble className="mb-[26px] flex h-[84px] w-[205px]">
      <span className="pt-[15px] pl-[24px] text-[39px] leading-[50px] text-[#f3fbf7]">??</span>
      <span className="absolute right-[22px] bottom-[9px] flex items-center gap-[13px] text-[32px] leading-[36px] tracking-[-3.6px] text-[#8fb1a3]">
        11:11 <Ticks />
      </span>
    </OutBubble>

    <Call width="w-[376px]" status="18 secs" statusClass="tracking-[-0.7px]" time="11:12" timeClass="tracking-[-2.6px]" />
    <Call width="w-[439px]" status="No answer" time="13:16" timeClass="tracking-[-1.8px]" />
    <Call width="w-[439px]" status="No answer" time="13:18" timeClass="tracking-[-1.8px]" />
    <Call width="w-[437px]" status="No answer" time="13:19" timeClass="tracking-[-1.8px]" />

    <OutBubble tail className="mb-[26px] h-[304px] w-[890px] pt-[12px] pl-[24px]">
      <div className="relative flex flex-col font-['Noto_Sans',sans-serif] text-[39.7px] leading-[54px] whitespace-pre text-[#f3fbf7]">
        {bengaliLines.map((line) => (
          <span key={line}>{line}</span>
        ))}
      </div>
      <span className="absolute right-[22px] bottom-[10px] flex items-center gap-[11px] text-[32px] leading-[36px] tracking-[-0.7px] text-[#8fb1a3]">
        13:25 <Ticks />
      </span>
    </OutBubble>

    <Call width="w-[444px]" status="No answer" time="13:26" />
    <Call width="w-[443px]" status="No answer" time="13:27" />
  </main>
);

const Composer = () => (
  <footer className="relative flex h-[141px] shrink-0 items-start pt-[6px] pl-[22px]">
    <div className="mt-[4px] flex h-[119px] w-[892px] items-center rounded-full bg-[#1f262a] pr-[34px] pl-[34px]">
      <svg className="h-[52px] w-[52px]" viewBox="0 0 52 52" fill="none" stroke="#8f9699" strokeWidth="4.600" strokeLinejoin="round">
        <path d="M18 2.500H34Q49.500 3 49.500 18V27Q47 36 38 44Q32 49.500 26 49.500H18Q2.500 49 2.500 34V18Q3 3 18 2.500Z" />
        <path d="M49 29H40Q29 29 29 40V49M15 31H32" />
        <path d="M16 31Q20 39 29 38L31 31Z" fill="#8f9699" strokeWidth="1" />
        <circle cx="17" cy="18" r="4" fill="#8f9699" stroke="none" />
        <circle cx="35" cy="18" r="4" fill="#8f9699" stroke="none" />
      </svg>
      <div className="ml-[34px] h-[62px] w-[5px] bg-white" />
      <span className="-ml-[2px] grow pt-[4px] text-[46px] leading-[56px] text-[#8b9194]">Message</span>
      <svg className="mr-[82px] h-[52px] w-[33px]" viewBox="0 0 33 52" fill="none" stroke="#8f9699" strokeWidth="4.600">
        <path d="M30.500 12V35Q30 49.500 17 49.500Q3 49 2.500 35V14Q3 2.500 13 2.500Q22.500 3 22.500 13V34Q22 39.500 17 39.500Q12 39 12 34V13" />
      </svg>
      <svg className="h-[48px] w-[52px]" viewBox="0 0 52 48" fill="none" stroke="#8f9699" strokeWidth="4.600" strokeLinejoin="round">
        <path d="M2.500 8H14L19 2.500H33L38 8H49.500V44.500H2.500Z" />
        <circle cx="26" cy="26.500" r="9.500" />
      </svg>
    </div>
    <div className="ml-[21px] flex h-[122px] w-[122px] items-center justify-center rounded-full bg-[#fafafa]">
      <svg className="h-[50px] w-[36px]" viewBox="0 0 36 50" fill="none" stroke="#0b1014" strokeWidth="4.600" strokeLinecap="round">
        <rect x="10.500" y="1" width="15" height="30" rx="7.500" fill="#0b1014" stroke="none" />
        <path d="M2.500 26Q4 39.500 18 39.500Q32 39.500 33.500 26M18 40V47" />
      </svg>
    </div>
  </footer>
);

export default function App() {
  return (
    <div className={`relative flex h-[2392px] w-[1080px] flex-col overflow-hidden bg-[#0a0f13] ${SERIF}`}>
      <Wallpaper />
      <Header />
      <Messages />
      <Composer />
      {/* Jump to the newest message */}
      <div className="absolute top-[2129px] left-[968px] flex h-[81px] w-[81px] items-center justify-center rounded-full bg-[#29333b] shadow-[0_3px_8px_#00000066]">
        <svg className="mt-[4px] h-[34px] w-[30px]" viewBox="0 0 30 34" fill="none" stroke="#8f989d" strokeWidth="4.400" strokeLinecap="round" strokeLinejoin="round">
          <path d="M3 3L15 15L27 3M3 19L15 31L27 19" />
        </svg>
      </div>
    </div>
  );
}
